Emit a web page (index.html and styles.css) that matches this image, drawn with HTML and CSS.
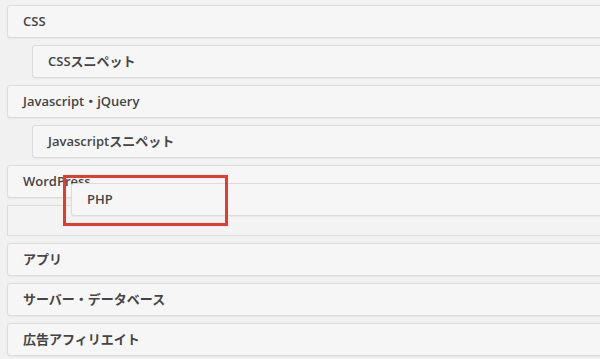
FILE: index.html
```html
<!DOCTYPE html>
<html lang="ja">
<head>
<meta charset="utf-8">
<title>Menu</title>
<link rel="stylesheet" href="styles.css">
</head>
<body>
<div class="stage">
  <ul class="menu">
    <li class="item">CSS</li>
    <li class="item sub">CSSスニペット</li>
    <li class="item">Javascript・jQuery</li>
    <li class="item sub">Javascriptスニペット</li>
    <li class="item">WordPress</li>
    <li class="placeholder"></li>
    <li class="item">アプリ</li>
    <li class="item">サーバー・データベース</li>
    <li class="item">広告アフィリエイト</li>
  </ul>
  <div class="item dragging">PHP</div>
  <div class="highlight"></div>
</div>
</body>
</html>
```
FILE: styles.css
```css
html, body {
  margin: 0;
  padding: 0;
  background: #f1f1f1;
  overflow: hidden;
}
.stage {
  position: relative;
  width: 600px;
  height: 359px;
  overflow: hidden;
}
.menu {
  list-style: none;
  margin: 0;
  padding: 5px 0 0 7px;
  width: 820px;
  display: flex;
  flex-direction: column;
  gap: 7px;
}
.item {
  box-sizing: border-box;
  height: 33px;
  border: 1px solid #dcdcdc;
  border-radius: 3px;
  background: #f6f6f6;
  box-shadow: 0 1px 1px rgba(0, 0, 0, 0.04);
  padding-left: 15px;
  font-family: "Open Sans", "Noto Sans CJK JP", sans-serif;
  font-weight: 600;
  font-size: 13px;
  line-height: 31px;
  color: #454545;
  white-space: nowrap;
}
.item.sub {
  margin-left: 25px;
}
.placeholder {
  box-sizing: border-box;
  height: 31px;
  border: 1px solid #dcdcdc;
  background: #f3f3f3;
}
.dragging {
  position: absolute;
  left: 71px;
  top: 183px;
  width: 700px;
  z-index: 2;
}
.highlight {
  position: absolute;
  left: 63px;
  top: 175px;
  width: 165px;
  height: 51px;
  box-sizing: border-box;
  border: 3px solid #e23c2f;
  z-index: 3;
}
```
